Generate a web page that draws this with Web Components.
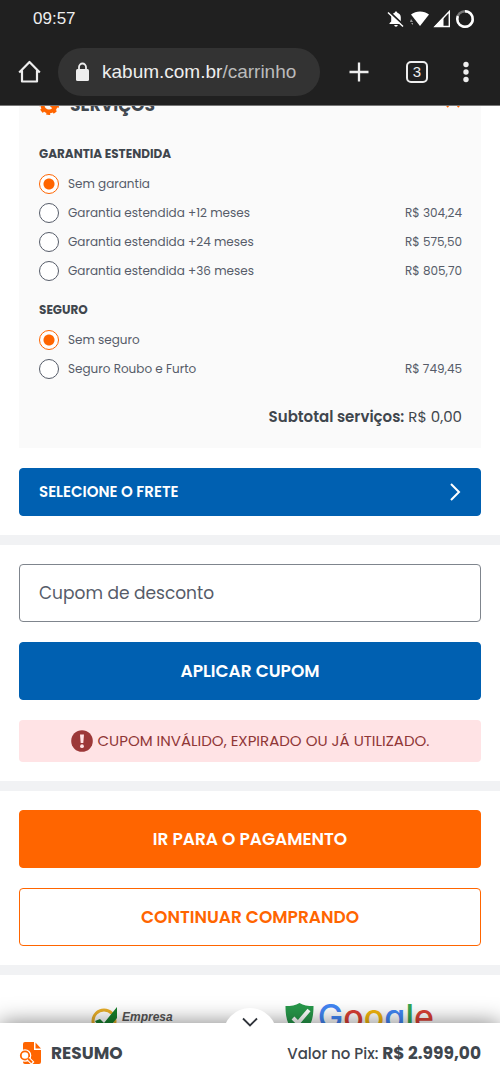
<!DOCTYPE html>
<html lang="pt-BR">
<head>
<meta charset="utf-8">
<meta name="viewport" content="width=device-width, initial-scale=1">
<title>Carrinho</title>
<style>
  html, body { margin: 0; height: 100%; }
  body { font-family: Poppins, Inter, sans-serif; color: #3f464d; background: #fff; }
</style>
</head>
<body>
<cart-app></cart-app>

<template id="t-app">
  <style>
    :host { display: flex; flex-direction: column; height: 100vh; overflow: hidden; }
    main { flex: 1; min-height: 0; overflow: hidden; }
  </style>
  <browser-bar></browser-bar>
  <main>
    <cart-section first>
      <services-card>
        <option-group name="garantia" heading="GARANTIA ESTENDIDA"
          options="Sem garantia|;Garantia estendida +12 meses|R$ 304,24;Garantia estendida +24 meses|R$ 575,50;Garantia estendida +36 meses|R$ 805,70"></option-group>
        <option-group name="seguro" heading="SEGURO"
          options="Sem seguro|;Seguro Roubo e Furto|R$ 749,45"></option-group>
        <span slot="total">R$ 0,00</span>
      </services-card>
      <cart-button variant="freight">SELECIONE O FRETE</cart-button>
    </cart-section>
    <cart-section>
      <coupon-field></coupon-field>
      <cart-button>APLICAR CUPOM</cart-button>
      <alert-box>CUPOM INVÁLIDO, EXPIRADO OU JÁ UTILIZADO.</alert-box>
    </cart-section>
    <cart-section>
      <cart-button variant="primary">IR PARA O PAGAMENTO</cart-button>
      <cart-button variant="outline">CONTINUAR COMPRANDO</cart-button>
    </cart-section>
    <trust-seals></trust-seals>
  </main>
  <summary-bar><span slot="price">R$ 2.999,00</span></summary-bar>
</template>

<template id="t-browser">
  <style>
    :host { display: block; background: #202020; color: #eee; font-family: "Liberation Sans", Arial, sans-serif; border-bottom: 1px solid #777; }
    svg { display: block; }
    .status { display: flex; align-items: center; justify-content: space-between; height: 38px; padding: 0 25px 0 33px; font-size: 17px; }
    .icons { display: flex; align-items: center; gap: 4px; }
    .bar { display: flex; align-items: center; height: 67px; padding: 0 29px 0 18px; }
    button { border: 0; padding: 0; background: none; color: inherit; font: inherit; display: block; }
    .url { flex: 1; display: flex; align-items: center; gap: 12px; height: 48px; box-sizing: border-box; padding: 0 17px; border-radius: 24px; background: #333; margin: 0 25px 0 17px; font-size: 19px; min-width: 0; white-space: nowrap; }
    .url i { font-style: normal; color: #bbb; }
    .acts { display: flex; align-items: center; gap: 32px; }
  </style>
  <div class="status"><span>09:57</span>
    <div class="icons">
      <svg width="18" height="18" viewBox="0 0 18 18"><path d="M9 1.500c.9 0 1.300.6 1.300 1.300 2.300.6 3.500 2.400 3.500 4.700v4l1.700 1.800v.7H2.500v-.7L4.200 11.500v-4c0-2.300 1.200-4.100 3.500-4.700C7.700 2.100 8.100 1.500 9 1.500zM7.300 15h3.400c0 1-.8 1.700-1.700 1.700S7.300 16 7.300 15z" fill="#fff"/><path d="M2 1.500l15 14" stroke="#202020" stroke-width="2"/><path d="M1 2.500l15 14" stroke="#fff" stroke-width="1.500"/></svg>
      <svg width="20" height="18" viewBox="0 0 20 18"><path d="M2 4.500C7 .5 15 .5 20 4.500L11 16z" fill="#fff"/><path d="M2 9l2 3H1zM2 13h2v2z" fill="#999"/></svg>
      <svg width="18" height="18" viewBox="0 0 18 18"><path d="M16.300 1.500v15H2z" fill="none" stroke="#fff" stroke-width="1.400"/><path d="M1 17L10.500 7v10z" fill="#fff"/></svg>
      <svg width="20" height="20" viewBox="0 0 20 20"><circle cx="10" cy="10" r="7.800" fill="none" stroke="#777" stroke-width="2.500"/><path d="M10 2.200A7.800 7.800 0 1 1 2.800 7" fill="none" stroke="#fff" stroke-width="2.500"/></svg>
    </div>
  </div>
  <div class="bar">
    <button aria-label="Início"><svg width="23" height="24" viewBox="0 0 23 24"><path d="M1.200 12.500L11.500 2l10.300 10.500M4 10.500V21.500h15V10.500" fill="none" stroke="#eee" stroke-width="2.200" stroke-linejoin="round"/></svg></button>
    <div class="url"><svg width="15" height="20" viewBox="0 0 15 20"><rect x="1" y="7" width="13" height="12" rx="1.500" fill="#eee"/><path d="M4 8V5a3.500 3.500 0 0 1 7 0v3" fill="none" stroke="#eee" stroke-width="1.800"/></svg><span>kabum.com.br<i>/carrinho</i></span></div>
    <div class="acts">
      <button aria-label="Nova aba"><svg width="28" height="22" viewBox="0 0 28 22"><path d="M14 1.500v19M4.500 11h19" stroke="#eee" stroke-width="2.300"/></svg></button>
      <button aria-label="Abas"><svg width="24" height="24" viewBox="0 0 24 24"><rect x="2" y="2" width="20" height="20" rx="4" fill="none" stroke="#eee" stroke-width="2"/><text x="12" y="17" text-anchor="middle" font-size="15" fill="#eee">3</text></svg></button>
      <button aria-label="Menu"><svg width="10" height="22" viewBox="0 0 10 22"><g fill="#eee"><circle cx="5" cy="3.500" r="2.700"/><circle cx="5" cy="11" r="2.700"/><circle cx="5" cy="18.500" r="2.700"/></g></svg></button>
    </div>
  </div>
</template>

<template id="t-section">
  <style>
    :host { display: flex; flex-direction: column; gap: 20px; padding: 19px; border-bottom: 10px solid #f1f2f4; }
    :host([first]) { padding-top: 0; }
  </style>
  <slot></slot>
</template>

<template id="t-services">
  <style>
    :host { display: flex; flex-direction: column; background: #fafafa; padding: 0 19px 19px 20px; }
    header { display: flex; align-items: center; height: 24px; margin: -13px 0 27px; }
    h2 { flex: 1; margin: 0 0 0 11px; font-size: 17px; line-height: 24px; font-weight: 700; }
    svg { display: block; }
    .groups { display: flex; flex-direction: column; gap: 15px; }
    p { margin: 22px 0 0; text-align: right; font-size: 15px; line-height: 24px; }
    b { font-weight: 600; }
  </style>
  <header>
    <svg width="20" height="24" viewBox="0 0 20 24"><circle cx="10" cy="12" r="6.500" fill="none" stroke="#ff6500" stroke-width="4"/><circle cx="10" cy="12" r="8.500" fill="none" stroke="#ff6500" stroke-width="3" stroke-dasharray="3.700 2.980" stroke-dashoffset="1.200"/><path d="M10 10l5 5" stroke="#ff6500" stroke-width="3"/></svg>
    <h2>SERVIÇOS</h2>
    <svg width="18" height="24" viewBox="0 0 18 24"><path d="M3 14l6-7 6 7" fill="none" stroke="#ff6500" stroke-width="2"/></svg>
  </header>
  <div class="groups"><slot></slot></div>
  <p><b>Subtotal serviços:</b> <slot name="total"></slot></p>
</template>

<template id="t-group">
  <style>
    :host { display: block; }
    fieldset { border: 0; margin: 0; padding: 0; min-width: 0; }
    legend { padding: 0; margin-bottom: 5px; font-size: 12px; line-height: 20px; font-weight: 700; }
    label { display: flex; align-items: center; height: 29px; font-size: 12px; line-height: 20px; color: #565c69; }
    .name { flex: 1; }
    input { appearance: none; box-sizing: border-box; width: 20px; height: 20px; margin: 0 9px 0 0; border: 1px solid #565c69; border-radius: 50%; background: #fff; }
    input:checked { border-color: #ff6500; background: radial-gradient(circle, #ff6500 5px, #fff 6px); }
  </style>
  <fieldset><legend></legend></fieldset>
</template>

<template id="t-button">
  <style>
    :host { display: block; }
    button { display: flex; align-items: center; justify-content: center; width: 100%; height: 58px; box-sizing: border-box; padding: 0 19px; border: 1px solid #0060b1; border-radius: 4px; background: #0060b1; color: #fff; font: 600 17px/24px Poppins, Inter, sans-serif; }
    svg { display: none; }
    :host([variant=freight]) button { height: 48px; font-size: 15px; justify-content: space-between; }
    :host([variant=freight]) svg { display: block; }
    :host([variant=primary]) button { background: #ff6500; border-color: #ff6500; }
    :host([variant=outline]) button { background: #fff; border-color: #ff6500; color: #ff6500; }
  </style>
  <button><span><slot></slot></span><svg width="12" height="20" viewBox="0 0 12 20"><path d="M2 2l8 8-8 8" fill="none" stroke="#fff" stroke-width="2"/></svg></button>
</template>

<template id="t-coupon">
  <style>
    :host { display: block; }
    input { display: block; width: 100%; height: 58px; box-sizing: border-box; padding: 0 19px; border: 1px solid #7f858d; border-radius: 4px; background: #fff; font: 400 17px/24px Poppins, Inter, sans-serif; color: #565c69; }
    input::placeholder { color: #565c69; opacity: 1; }
  </style>
  <input type="text" placeholder="Cupom de desconto" aria-label="Cupom de desconto">
</template>

<template id="t-alert">
  <style>
    :host { display: flex; align-items: center; justify-content: center; gap: 5px; height: 42px; border-radius: 4px; background: #ffe3e5; color: #903737; font-size: 15px; line-height: 20px; white-space: nowrap; }
    svg { display: block; }
  </style>
  <svg width="22" height="22" viewBox="0 0 22 22"><circle cx="11" cy="11" r="10.800" fill="#9c3838"/><path d="M9 4.500h4l-.7 8.500H9.700z" fill="#ffe3e5"/><circle cx="11" cy="16.200" r="1.900" fill="#ffe3e5"/></svg>
  <span><slot></slot></span>
</template>

<template id="t-seals">
  <style>
    :host { display: flex; justify-content: space-between; padding: 24px 66px 0 91px; }
    svg { display: block; }
    .seal { display: flex; gap: 4px; }
    .company { font: italic 700 12px/16px "Liberation Sans", Arial, sans-serif; color: #555; padding-top: 10px; }
    .check { padding-top: 8px; }
    .shield { padding-top: 3px; }
    .google { font: 500 34px/36px Inter, sans-serif; }
    .b { color: #4285f4; } .r { color: #d93f35; } .y { color: #f2b50c; } .g { color: #34a853; }
  </style>
  <div class="seal"><svg class="check" width="27" height="28" viewBox="0 0 27 28"><circle cx="13" cy="14" r="11" fill="#fff" stroke="#e8ae28" stroke-width="3"/><path d="M4 14l5-2 4 4L26 0v11L13 27z" fill="#16802c"/></svg><span class="company">Empresa</span></div>
  <div class="seal"><svg class="shield" width="29" height="34" viewBox="0 0 29 34"><path d="M14.500 1c4 2.500 8 3 14 3 0 14-3 23-14 29C3.500 27 .5 18 .5 4c6 0 10-.5 14-3z" fill="#27984a"/><path d="M8 16l5 5L24 8" fill="none" stroke="#fff" stroke-width="4"/></svg><span class="google"><span class="b">G</span><span class="r">o</span><span class="y">o</span><span class="b">g</span><span class="g">l</span><span class="r">e</span></span></div>
</template>

<template id="t-summary">
  <style>
    :host { display: flex; align-items: center; height: 60px; padding: 0 19px; background: #fff; position: relative; box-shadow: 0 0 22px rgba(0,0,0,.5); }
    svg { display: block; }
    h2 { flex: 1; margin: 0 0 0 9px; font-size: 17px; line-height: 24px; font-weight: 700; }
    p { margin: 0; font-size: 15px; line-height: 24px; font-weight: 500; }
    b { font-size: 17px; font-weight: 700; }
    button { position: absolute; left: 50%; top: -15px; width: 54px; height: 54px; margin-left: -27px; border: 0; padding: 9px 0 0; border-radius: 50%; background: #fff; display: flex; justify-content: center; align-items: flex-start; }
  </style>
  <button aria-label="Abrir resumo"><svg width="16" height="11" viewBox="0 0 16 11"><path d="M1 1.500l7 7 7-7" fill="none" stroke="#30343b" stroke-width="1.800"/></svg></button>
  <svg width="23" height="24" viewBox="0 0 23 24"><path d="M6 1h9v8h7v12q0 2-2 2H6q-2 0-2-2V3q0-2 2-2zM16.500 1.500L22 7.500h-5.500z" fill="#ff6500"/><circle cx="6" cy="14.500" r="6.300" fill="#fff"/><circle cx="6" cy="14.500" r="4.200" fill="#fff" stroke="#ff6500" stroke-width="1.800"/><path d="M9 17.500l5 5" stroke="#fff" stroke-width="4"/><path d="M9 17.500l4 4" stroke="#ff6500" stroke-width="2"/></svg>
  <h2>RESUMO</h2>
  <p>Valor no Pix: <b><slot name="price"></slot></b></p>
</template>

<script>
  class Base extends HTMLElement {
    constructor() {
      super();
      this.attachShadow({ mode: 'open' }).append(document.getElementById(this.constructor.template).content.cloneNode(true));
    }
  }
  const define = (tag, id) => customElements.define(tag, class extends Base { static template = id; });

  class OptionGroup extends Base {
    static template = 't-group';
    connectedCallback() {
      const name = this.getAttribute('name');
      const fieldset = this.shadowRoot.querySelector('fieldset');
      if (fieldset.querySelector('label')) return;
      this.shadowRoot.querySelector('legend').textContent = this.getAttribute('heading');
      this.getAttribute('options').split(';').forEach((option, i) => {
        const [title, price] = option.split('|');
        const label = document.createElement('label');
        const input = document.createElement('input');
        input.type = 'radio';
        input.name = name;
        input.checked = i === 0;
        const text = document.createElement('span');
        text.className = 'name';
        text.textContent = title;
        label.append(input, text);
        if (price) {
          const cost = document.createElement('span');
          cost.textContent = price;
          label.append(cost);
        }
        fieldset.append(label);
      });
    }
  }

  customElements.define('option-group', OptionGroup);
  define('browser-bar', 't-browser');
  define('cart-section', 't-section');
  define('services-card', 't-services');
  define('cart-button', 't-button');
  define('coupon-field', 't-coupon');
  define('alert-box', 't-alert');
  define('trust-seals', 't-seals');
  define('summary-bar', 't-summary');
  define('cart-app', 't-app');
</script>
</body>
</html>
